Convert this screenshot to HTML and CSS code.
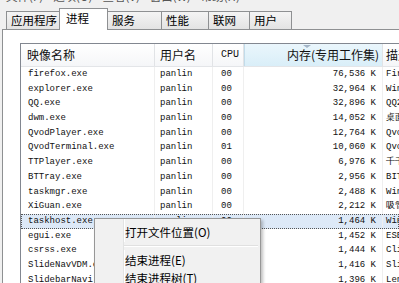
FILE: index.html
```html
<!DOCTYPE html>
<html>
<head lang="zh-CN">
	<meta charset="utf-8">
	<title>任务管理器</title>
	<link rel="stylesheet" href="styles.css">
</head>
<body>
	<div class="menubar">
		<span>文件(F)</span><span>选项(O)</span><span>查看(V)</span><span>窗口(W)</span><span>帮助(H)</span>
	</div>
	<div class="tabs">
		<div class="tab w1">应用程序</div>
		<div class="tab on w2">进程</div>
		<div class="tab w3">服务</div>
		<div class="tab w4">性能</div>
		<div class="tab w5">联网</div>
		<div class="tab w6">用户</div>
	</div>
	<div class="panel">
		<div class="list">
			<div class="row head">
				<div class="name">映像名称</div>
				<div class="user">用户名</div>
				<div class="cpu">CPU</div>
				<div class="mem sorted">内存(专用工作集)<i class="arrow"></i></div>
				<div class="desc">描述</div>
			</div>
			<div class="row"><div class="name">firefox.exe</div><div class="user">panlin</div><div class="cpu">00</div><div class="mem">76,536 K</div><div class="desc">Firefox</div></div>
			<div class="row"><div class="name">explorer.exe</div><div class="user">panlin</div><div class="cpu">00</div><div class="mem">32,964 K</div><div class="desc">Windows 资源管理器</div></div>
			<div class="row"><div class="name">QQ.exe</div><div class="user">panlin</div><div class="cpu">00</div><div class="mem">32,896 K</div><div class="desc">QQ2011</div></div>
			<div class="row"><div class="name">dwm.exe</div><div class="user">panlin</div><div class="cpu">00</div><div class="mem">14,052 K</div><div class="desc">桌面窗口管理器</div></div>
			<div class="row"><div class="name">QvodPlayer.exe</div><div class="user">panlin</div><div class="cpu">00</div><div class="mem">12,764 K</div><div class="desc">QvodPlayer</div></div>
			<div class="row"><div class="name">QvodTerminal.exe</div><div class="user">panlin</div><div class="cpu">01</div><div class="mem">10,060 K</div><div class="desc">QvodTerminal</div></div>
			<div class="row"><div class="name">TTPlayer.exe</div><div class="user">panlin</div><div class="cpu">00</div><div class="mem">6,976 K</div><div class="desc">千千静听</div></div>
			<div class="row"><div class="name">BTTray.exe</div><div class="user">panlin</div><div class="cpu">00</div><div class="mem">2,956 K</div><div class="desc">BITTray</div></div>
			<div class="row"><div class="name">taskmgr.exe</div><div class="user">panlin</div><div class="cpu">00</div><div class="mem">2,488 K</div><div class="desc">Windows 任务管理器</div></div>
			<div class="row"><div class="name">XiGuan.exe</div><div class="user">panlin</div><div class="cpu">00</div><div class="mem">2,212 K</div><div class="desc">吸管</div></div>
			<div class="row sel"><div class="name">taskhost.exe</div><div class="user">panlin</div><div class="cpu">00</div><div class="mem">1,464 K</div><div class="desc">Windows 任务的主机进程</div></div>
			<div class="row"><div class="name">egui.exe</div><div class="user">panlin</div><div class="cpu">00</div><div class="mem">1,452 K</div><div class="desc">ESET GUI</div></div>
			<div class="row"><div class="name">csrss.exe</div><div class="user">SYSTEM</div><div class="cpu">00</div><div class="mem">1,444 K</div><div class="desc">Client Server</div></div>
			<div class="row"><div class="name">SlideNavVDM.exe</div><div class="user">panlin</div><div class="cpu">00</div><div class="mem">1,416 K</div><div class="desc">SlideNav</div></div>
			<div class="row last"><div class="name">SlidebarNavi.exe</div><div class="user">panlin</div><div class="cpu">00</div><div class="mem">1,396 K</div><div class="desc">Lenovo</div></div>
		</div>
	</div>
	<!--右键菜单-->
	<div class="ctxmenu">
		<div class="mi">打开文件位置(O)</div>
		<div class="sep"></div>
		<div class="mi">结束进程(E)</div>
		<div class="mi">结束进程树(T)</div>
	</div>
</body>
</html>
```

FILE: styles.css
```css
body{
	margin: 0;
	width: 399px;
	height: 283px;
	overflow: hidden;
	position: relative;
	background: #f0f0f0;
	font-family: "Noto Sans CJK SC", "Liberation Sans", sans-serif;
	font-size: 12px;
	color: #000;
}
.menubar{
	height: 7px;
	overflow: hidden;
	display: flex;
	gap: 10px;
	padding-left: 6px;
}
.menubar span{
	font-size: 11.5px;
	line-height: 12px;
	margin-top: -10px;
	color: #555;
}
/* 选项卡 */
.tabs{
	display: flex;
	align-items: flex-end;
	height: 22px;
	padding-left: 6px;
}
.tab{
	height: 18px;
	box-sizing: border-box;
	border: 1px solid #8e9092;
	border-bottom: none;
	margin-right: -1px;
	padding-left: 4px;
	background: linear-gradient(#f4f4f4, #e3e3e3);
	font-size: 11.5px;
	line-height: 17px;
	white-space: nowrap;
}
.tab.on{
	height: 22px;
	margin-bottom: -1px;
	padding-left: 6px;
	background: #fff;
	line-height: 19px;
	position: relative;
	z-index: 1;
}
.w1{ width: 54px; }
.w2{ width: 49px; }
.w3{ width: 55px; }
.w4{ width: 48px; }
.w5{ width: 42px; }
.w6{ width: 43px; }
.panel{
	margin-left: 2px;
	height: 254px;
	overflow: hidden;
	box-sizing: border-box;
	padding: 13px 0 0 17px;
	border-left: 1px solid #8e9092;
	border-top: 1px solid #8e9092;
	background: #fff;
}
/* 进程列表 */
.list{
	border-left: 1px solid #828790;
	border-top: 1px solid #828790;
	background: #fff;
}
.row{
	display: grid;
	grid-template-columns: 134px 58px 31px 139px 1fr;
	height: 14.7px;
	line-height: 14.7px;
	font-family: "Liberation Mono", monospace;
	font-size: 9px;
	white-space: nowrap;
	color: #111;
}
.row > div{
	overflow: hidden;
	box-sizing: border-box;
	border-right: 1px solid #efefef;
}
.row .name{ padding-left: 7px; }
.row .user{ padding-left: 5px; }
.row .cpu{ padding-left: 8px; }
.row .mem{ text-align: right; padding-right: 6px; }
.row .desc{ padding-left: 3px; border-right: none; }
.row.last{ height: 12px; }
.row.head{
	height: 23px;
	line-height: 22px;
	box-sizing: border-box;
	border-bottom: 1px solid #e3e5e8;
	background: linear-gradient(#fff, #f5f6f8);
	font-family: "Noto Sans CJK SC", "Liberation Sans", sans-serif;
	font-size: 12px;
}
.row.head > div{
	border-right: 1px solid #e1e3e6;
}
.row.head .name{ padding-left: 6px; }
.row.head .cpu{
	font-family: "Liberation Mono", monospace;
	font-size: 10px;
}
.row.head .mem{ padding-right: 3px; }
.row.head .desc{ border-right: none; }
.sorted{
	position: relative;
	background: linear-gradient(#eaf6fc, #d9eef8);
	border-left: 1px solid #c2dcea;
}
.arrow{
	position: absolute;
	left: 58px;
	top: 1px;
	width: 0;
	height: 0;
	border-left: 4px solid transparent;
	border-right: 4px solid transparent;
	border-top: 3px solid #a3b4c6;
}
.row.sel{
	background: #dde9f7;
	outline: 1px dotted #555;
	outline-offset: -1px;
}
/* 右键菜单 */
.ctxmenu{
	position: absolute;
	left: 94px;
	top: 218px;
	width: 167px;
	height: 65px;
	overflow: hidden;
	box-sizing: border-box;
	padding: 3px 2px 0 0;
	border: 1px solid #979797;
	border-bottom: none;
	background: linear-gradient(to right, #f1f1f1 28px, #e2e3e3 28px, #e2e3e3 29px, #fff 29px, #fff 30px, #f1f1f1 30px);
	box-shadow: 2px 2px 3px rgba(0,0,0,0.25);
	z-index: 5;
}
.mi{
	height: 20px;
	line-height: 20px;
	padding-left: 30px;
	font-size: 11.5px;
	white-space: nowrap;
}
.mi:last-child{
	height: 18px;
	line-height: 17px;
}
.sep{
	height: 8px;
	margin-left: 29px;
	background: linear-gradient(#f1f1f1 3px, #e0e0e0 3px, #e0e0e0 4px, #fff 4px, #fff 5px, #f1f1f1 5px);
}
```
